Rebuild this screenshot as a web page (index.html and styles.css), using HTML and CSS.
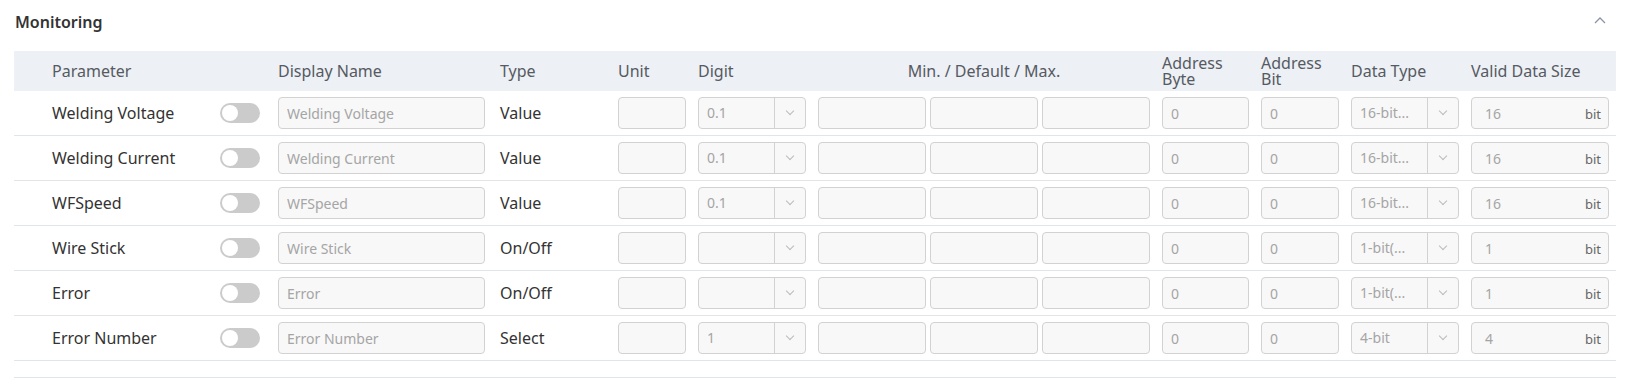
FILE: index.html
```html
<!DOCTYPE html>
<html lang="en">
<head>
    <meta charset="UTF-8">
    <meta name="viewport" content="width=device-width, initial-scale=1.0">
    <title>Monitoring</title>
    <link rel="stylesheet" href="styles.css">
</head>
<body>
    <div class="panel">
        <div class="panel-head">
            <span class="panel-title">Monitoring</span>
            <svg class="collapse" width="12" height="8" viewBox="0 0 12 8">
                <polyline points="1,7 6,2 11,7" fill="none" stroke="#8f93aa" stroke-width="1.3"/>
            </svg>
        </div>

        <div class="table">
            <div class="row head">
                <div class="cell">Parameter</div>
                <div class="cell"></div>
                <div class="cell">Display Name</div>
                <div class="cell type">Type</div>
                <div class="cell">Unit</div>
                <div class="cell">Digit</div>
                <div class="cell center">Min. / Default / Max.</div>
                <div class="cell two">Address<br>Byte</div>
                <div class="cell two">Address<br>Bit</div>
                <div class="cell">Data Type</div>
                <div class="cell">Valid Data Size</div>
            </div>

            <div class="row">
                <div class="cell name">Welding Voltage</div>
                <div class="cell"><span class="toggle"></span></div>
                <div class="cell"><input class="field" placeholder="Welding Voltage"></div>
                <div class="cell type">Value</div>
                <div class="cell"><input class="field"></div>
                <div class="cell"><div class="select"><span>0.1</span><i></i></div></div>
                <div class="cell triple"><input class="field"><input class="field"><input class="field"></div>
                <div class="cell"><input class="field" value="0"></div>
                <div class="cell"><input class="field" value="0"></div>
                <div class="cell"><div class="select"><span>16-bit...</span><i></i></div></div>
                <div class="cell"><div class="size"><span>16</span><em>bit</em></div></div>
            </div>

            <div class="row">
                <div class="cell name">Welding Current</div>
                <div class="cell"><span class="toggle"></span></div>
                <div class="cell"><input class="field" placeholder="Welding Current"></div>
                <div class="cell type">Value</div>
                <div class="cell"><input class="field"></div>
                <div class="cell"><div class="select"><span>0.1</span><i></i></div></div>
                <div class="cell triple"><input class="field"><input class="field"><input class="field"></div>
                <div class="cell"><input class="field" value="0"></div>
                <div class="cell"><input class="field" value="0"></div>
                <div class="cell"><div class="select"><span>16-bit...</span><i></i></div></div>
                <div class="cell"><div class="size"><span>16</span><em>bit</em></div></div>
            </div>

            <div class="row">
                <div class="cell name">WFSpeed</div>
                <div class="cell"><span class="toggle"></span></div>
                <div class="cell"><input class="field" placeholder="WFSpeed"></div>
                <div class="cell type">Value</div>
                <div class="cell"><input class="field"></div>
                <div class="cell"><div class="select"><span>0.1</span><i></i></div></div>
                <div class="cell triple"><input class="field"><input class="field"><input class="field"></div>
                <div class="cell"><input class="field" value="0"></div>
                <div class="cell"><input class="field" value="0"></div>
                <div class="cell"><div class="select"><span>16-bit...</span><i></i></div></div>
                <div class="cell"><div class="size"><span>16</span><em>bit</em></div></div>
            </div>

            <div class="row">
                <div class="cell name">Wire Stick</div>
                <div class="cell"><span class="toggle"></span></div>
                <div class="cell"><input class="field" placeholder="Wire Stick"></div>
                <div class="cell type">On/Off</div>
                <div class="cell"><input class="field"></div>
                <div class="cell"><div class="select"><span></span><i></i></div></div>
                <div class="cell triple"><input class="field"><input class="field"><input class="field"></div>
                <div class="cell"><input class="field" value="0"></div>
                <div class="cell"><input class="field" value="0"></div>
                <div class="cell"><div class="select"><span>1-bit(...</span><i></i></div></div>
                <div class="cell"><div class="size"><span>1</span><em>bit</em></div></div>
            </div>

            <div class="row">
                <div class="cell name">Error</div>
                <div class="cell"><span class="toggle"></span></div>
                <div class="cell"><input class="field" placeholder="Error"></div>
                <div class="cell type">On/Off</div>
                <div class="cell"><input class="field"></div>
                <div class="cell"><div class="select"><span></span><i></i></div></div>
                <div class="cell triple"><input class="field"><input class="field"><input class="field"></div>
                <div class="cell"><input class="field" value="0"></div>
                <div class="cell"><input class="field" value="0"></div>
                <div class="cell"><div class="select"><span>1-bit(...</span><i></i></div></div>
                <div class="cell"><div class="size"><span>1</span><em>bit</em></div></div>
            </div>

            <div class="row">
                <div class="cell name">Error Number</div>
                <div class="cell"><span class="toggle"></span></div>
                <div class="cell"><input class="field" placeholder="Error Number"></div>
                <div class="cell type">Select</div>
                <div class="cell"><input class="field"></div>
                <div class="cell"><div class="select"><span>1</span><i></i></div></div>
                <div class="cell triple"><input class="field"><input class="field"><input class="field"></div>
                <div class="cell"><input class="field" value="0"></div>
                <div class="cell"><input class="field" value="0"></div>
                <div class="cell"><div class="select"><span>4-bit</span><i></i></div></div>
                <div class="cell"><div class="size"><span>4</span><em>bit</em></div></div>
            </div>

            <div class="table-foot"></div>
        </div>
    </div>
</body>
</html>
```

FILE: styles.css
```css
body {
    margin: 0;
    font-family: "Noto Sans", sans-serif;
    color: #333;
    background: #fff;
}
.panel {
    padding: 0 15px 0 14px;
}
.panel-head {
    height: 43px;
    display: flex;
    align-items: center;
    justify-content: space-between;
    margin-bottom: 8px;
}
.panel-title {
    font-size: 16px;
    font-weight: 600;
    color: #333;
    padding-left: 1px;
}
.collapse {
    margin-right: 10px;
    margin-top: -4px;
}
.row {
    display: grid;
    grid-template-columns: 156px 46px 207px 109px 68px 108px 332px 87px 78px 108px 138px;
    column-gap: 12px;
    align-items: center;
    padding: 0 7px 0 38px;
    height: 44px;
    border-bottom: 1px solid #e1e4e8;
}
.row.head {
    height: 40px;
    background: #edf0f4;
    border-bottom: none;
    color: #555a63;
}
.cell {
    font-size: 16px;
    min-width: 0;
    white-space: nowrap;
}
.cell.two {
    line-height: 16px;
}
.cell.center {
    text-align: center;
}
.cell.type {
    padding-left: 3px;
}
.name {
    color: #333;
}
.toggle {
    display: block;
    width: 40px;
    height: 20px;
    border-radius: 10px;
    background: #cbcbcb;
    position: relative;
}
.toggle::after {
    content: "";
    position: absolute;
    left: 2px;
    top: 2px;
    width: 16px;
    height: 16px;
    border-radius: 50%;
    background: #fff;
}
.field {
    display: block;
    box-sizing: border-box;
    width: 100%;
    height: 32px;
    margin: 0;
    padding: 0 8px;
    border: 1px solid #d2d2d2;
    border-radius: 4px;
    background: #f8f8f8;
    font-family: "Noto Sans", sans-serif;
    font-size: 14px;
    color: #a5a5a5;
    outline: none;
}
.field::placeholder {
    color: #a5a5a5;
}
.triple {
    display: flex;
    gap: 4px;
}
.select {
    box-sizing: border-box;
    height: 32px;
    display: flex;
    border: 1px solid #d2d2d2;
    border-radius: 4px;
    background: #f8f8f8;
    font-size: 14px;
    color: #a5a5a5;
}
.select span {
    flex: 1;
    padding: 0 8px;
    line-height: 30px;
    white-space: nowrap;
    overflow: hidden;
}
.select i {
    width: 30px;
    border-left: 1px solid #d2d2d2;
    position: relative;
}
.select i::after {
    content: "";
    position: absolute;
    left: 12px;
    top: 10px;
    width: 5px;
    height: 5px;
    border-right: 1px solid #bbb;
    border-bottom: 1px solid #bbb;
    transform: rotate(45deg);
}
.size {
    box-sizing: border-box;
    height: 32px;
    display: flex;
    align-items: center;
    justify-content: space-between;
    padding: 0 7px 0 13px;
    border: 1px solid #d2d2d2;
    border-radius: 4px;
    background: #f8f8f8;
    font-size: 14px;
    color: #a5a5a5;
}
.size em {
    font-style: normal;
    font-size: 13px;
    color: #666;
    padding-top: 2px;
}
.table-foot {
    height: 16px;
    border-bottom: 1px solid #e1e4e8;
}
```
